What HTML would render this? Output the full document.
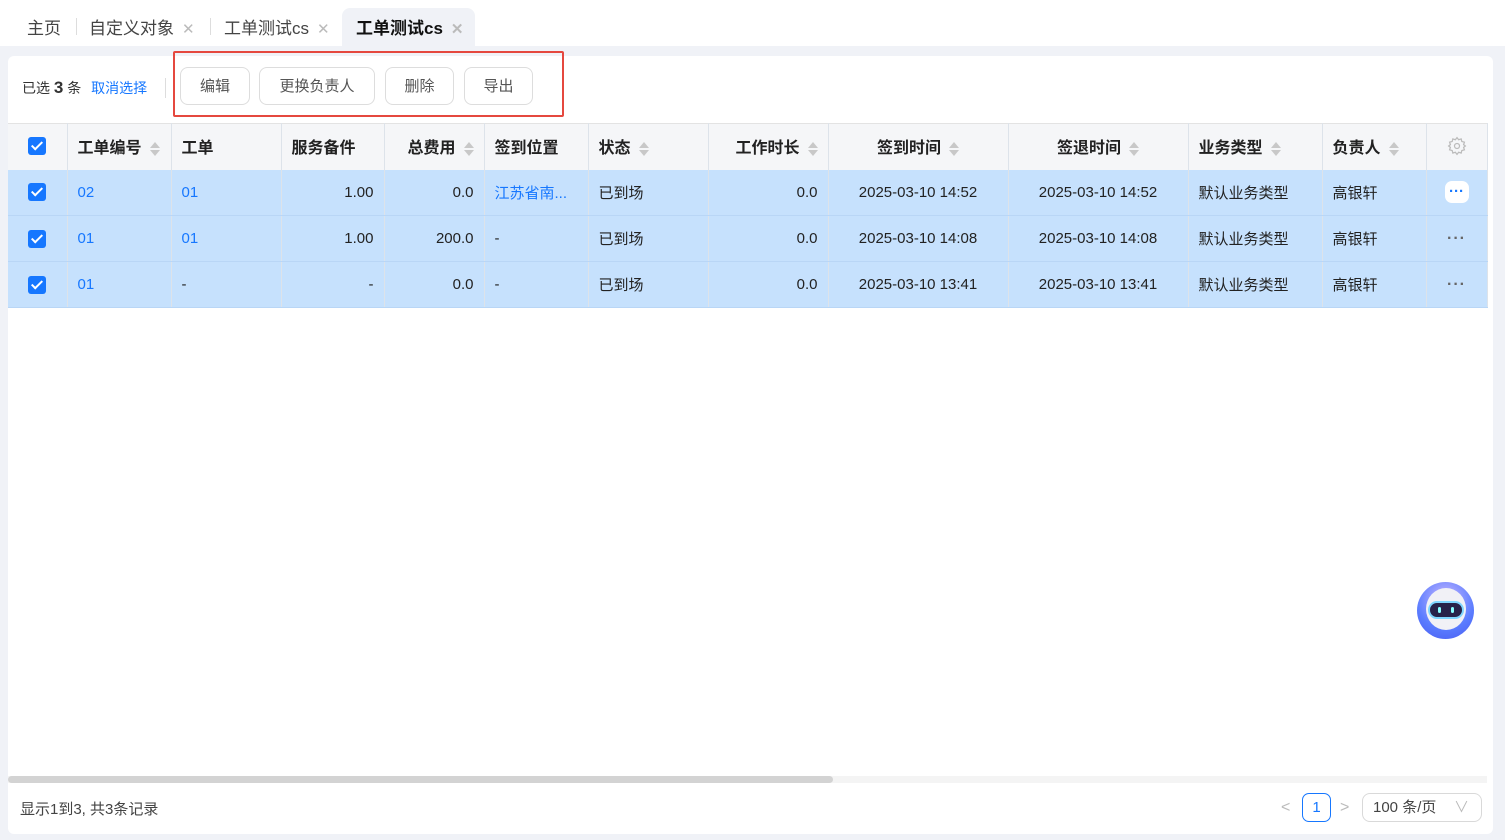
<!DOCTYPE html>
<html><head><meta charset="utf-8"><style>
*{box-sizing:border-box;margin:0;padding:0}
body{width:1505px;height:840px;background:#f0f2f7;font-family:"Liberation Sans","Noto Sans CJK SC",sans-serif;font-size:15px;color:#222;position:relative;overflow:hidden}
.tabs{position:absolute;left:0;top:0;width:1505px;height:46px;background:#fff}
.tab{position:absolute;top:14px;font-size:17px;color:#444}
.x{color:#bbb;font-size:15px;margin-left:8px}
.sep{position:absolute;top:18px;width:1px;height:17px;background:#ddd}
.act{position:absolute;left:342px;top:8px;width:133px;height:38px;background:#f0f2f7;border-radius:8px 8px 0 0}
.card{position:absolute;left:8px;top:56px;width:1485px;height:778px;background:#fff;border-radius:6px 6px 6px 6px}
.btn{position:absolute;top:67px;height:38px;border:1px solid #ddd;border-radius:8px;font-size:15px;color:#555;text-align:center;line-height:38px;background:#fff}
table{position:absolute;left:8px;top:123px;border-collapse:collapse;table-layout:fixed;width:1479px}
td,th{height:46px;border-right:1px solid #dde3ea;padding:0 10px;white-space:nowrap;overflow:hidden}
th{background:#f5f6f8;font-weight:bold;font-size:16px;text-align:left;border-top:1px solid #e3e3e3;color:#222;padding-bottom:2px}
tr.r td{background:#c6e1fd;border-bottom:1px solid #b9d6f6}
.b{color:#1677ff}.rt{text-align:right}.c{text-align:center}
.cb{display:inline-block;width:18px;height:18px;background:#1677ff;border-radius:3px;position:relative;vertical-align:middle}
.cb:after{content:"";position:absolute;left:6px;top:2px;width:4px;height:9px;border:solid #fff;border-width:0 2.5px 2.5px 0;transform:rotate(45deg)}
.s{display:inline-block;vertical-align:middle;margin-left:8px;width:10px;height:16px;position:relative}
.s:before,.s:after{content:"";position:absolute;left:0;border-left:5px solid transparent;border-right:5px solid transparent}
.s:before{top:1px;border-bottom:6px solid #c8c8c8}.s:after{top:9px;border-top:6px solid #c8c8c8}
.dots{color:#666;font-size:16px;letter-spacing:1px;font-weight:bold}
</style></head><body>
<div class="tabs">
<div class="act"></div>
<span class="tab" style="left:27px">主页</span><div class="sep" style="left:76px"></div>
<span class="tab" style="left:89px">自定义对象<span class="x">✕</span></span><div class="sep" style="left:210px"></div>
<span class="tab" style="left:224px">工单测试cs<span class="x">✕</span></span>
<span class="tab" style="left:356px;font-weight:bold;color:#111">工单测试cs<span class="x">✕</span></span>
</div>
<div class="card"></div>
<div style="position:absolute;left:22px;top:78px;font-size:14px;color:#333">已选 <b style="font-size:17px">3</b> 条 <span class="b" style="margin-left:6px">取消选择</span></div>
<div style="position:absolute;left:165px;top:78px;width:1px;height:20px;background:#ddd"></div>
<div style="position:absolute;left:173px;top:51px;width:391px;height:66px;border:2px solid #e5483f;border-radius:2px"></div>
<div class="btn" style="left:180px;width:70px">编辑</div>
<div class="btn" style="left:259px;width:116px">更换负责人</div>
<div class="btn" style="left:385px;width:69px">删除</div>
<div class="btn" style="left:464px;width:69px">导出</div>
<table>
<colgroup><col style="width:59px"><col style="width:104px"><col style="width:110px"><col style="width:103px"><col style="width:100px"><col style="width:104px"><col style="width:120px"><col style="width:120px"><col style="width:180px"><col style="width:180px"><col style="width:134px"><col style="width:104px"><col style="width:61px"></colgroup>
<tr><th class="c"><span class="cb"></span></th><th>工单编号<span class="s"></span></th><th>工单</th><th>服务备件</th><th class="rt">总费用<span class="s"></span></th><th>签到位置</th><th>状态<span class="s"></span></th><th class="rt">工作时长<span class="s"></span></th><th class="c">签到时间<span class="s"></span></th><th class="c">签退时间<span class="s"></span></th><th>业务类型<span class="s"></span></th><th>负责人<span class="s"></span></th><th class="c" style="border-left:1px solid #e6e6e6;box-shadow:-3px 0 4px rgba(0,0,0,.05)"><svg width="20" height="20" viewBox="0 0 24 24" fill="none" stroke="#bbb" stroke-width="1.5" style="vertical-align:middle"><circle cx="12" cy="12" r="3"/><path d="M12 2l2 2.5 3-1 .8 3.1 3.1.8-1 3L22 12l-2.1 1.6 1 3-3.1.8-.8 3.1-3-1L12 22l-2-2.5-3 1-.8-3.1-3.1-.8 1-3L2 12l2.1-1.6-1-3 3.1-.8.8-3.1 3 1z"/></svg></th></tr>
<tr class="r"><td class="c"><span class="cb"></span></td><td class="b">02</td><td class="b">01</td><td class="rt">1.00</td><td class="rt">0.0</td><td class="b">江苏省南...</td><td>已到场</td><td class="rt">0.0</td><td class="c">2025-03-10 14:52</td><td class="c">2025-03-10 14:52</td><td>默认业务类型</td><td>高银轩</td><td class="c"><span style="display:inline-block;width:24px;height:22px;background:#fff;border-radius:7px;color:#1677ff;font-weight:bold;line-height:22px;vertical-align:middle">···</span></td></tr>
<tr class="r"><td class="c"><span class="cb"></span></td><td class="b">01</td><td class="b">01</td><td class="rt">1.00</td><td class="rt">200.0</td><td>-</td><td>已到场</td><td class="rt">0.0</td><td class="c">2025-03-10 14:08</td><td class="c">2025-03-10 14:08</td><td>默认业务类型</td><td>高银轩</td><td class="c dots">···</td></tr>
<tr class="r"><td class="c"><span class="cb"></span></td><td class="b">01</td><td>-</td><td class="rt">-</td><td class="rt">0.0</td><td>-</td><td>已到场</td><td class="rt">0.0</td><td class="c">2025-03-10 13:41</td><td class="c">2025-03-10 13:41</td><td>默认业务类型</td><td>高银轩</td><td class="c dots">···</td></tr>
</table>
<div style="position:absolute;left:1417px;top:582px;width:57px;height:57px;border-radius:50%;background:radial-gradient(circle at 50% 30%,#c9b8ff,#5a7cff 60%,#4a5cf0)"></div>
<div style="position:absolute;left:1426px;top:588px;width:40px;height:42px;border-radius:50%;background:#f1f1f6"></div>
<div style="position:absolute;left:1428px;top:601px;width:36px;height:18px;border-radius:9px;background:#27234a;border:2px solid #7fd6ff"></div>
<div style="position:absolute;left:1438px;top:607px;width:3px;height:6px;background:#8ff;border-radius:2px"></div>
<div style="position:absolute;left:1451px;top:607px;width:3px;height:6px;background:#8ff;border-radius:2px"></div>
<div style="position:absolute;left:8px;top:776px;width:1479px;height:7px;background:#f4f4f4"></div>
<div style="position:absolute;left:8px;top:776px;width:825px;height:7px;background:#d3d3d3;border-radius:4px"></div>
<div style="position:absolute;left:20px;top:798px;font-size:15px;color:#444">显示1到3, 共3条记录</div>
<div style="position:absolute;left:1281px;top:799px;color:#bbb;font-size:16px">&lt;</div>
<div style="position:absolute;left:1302px;top:793px;width:29px;height:29px;border:1px solid #1677ff;border-radius:7px;color:#1677ff;text-align:center;line-height:27px;font-size:15px">1</div>
<div style="position:absolute;left:1340px;top:799px;color:#bbb;font-size:16px">&gt;</div>
<div style="position:absolute;left:1362px;top:793px;width:120px;height:29px;border:1px solid #d9d9d9;border-radius:8px;font-size:15px;color:#444;line-height:27px;padding-left:10px">100 条/页<span style="position:absolute;right:12px;top:0;color:#bbb">∨</span></div>
</body></html>
